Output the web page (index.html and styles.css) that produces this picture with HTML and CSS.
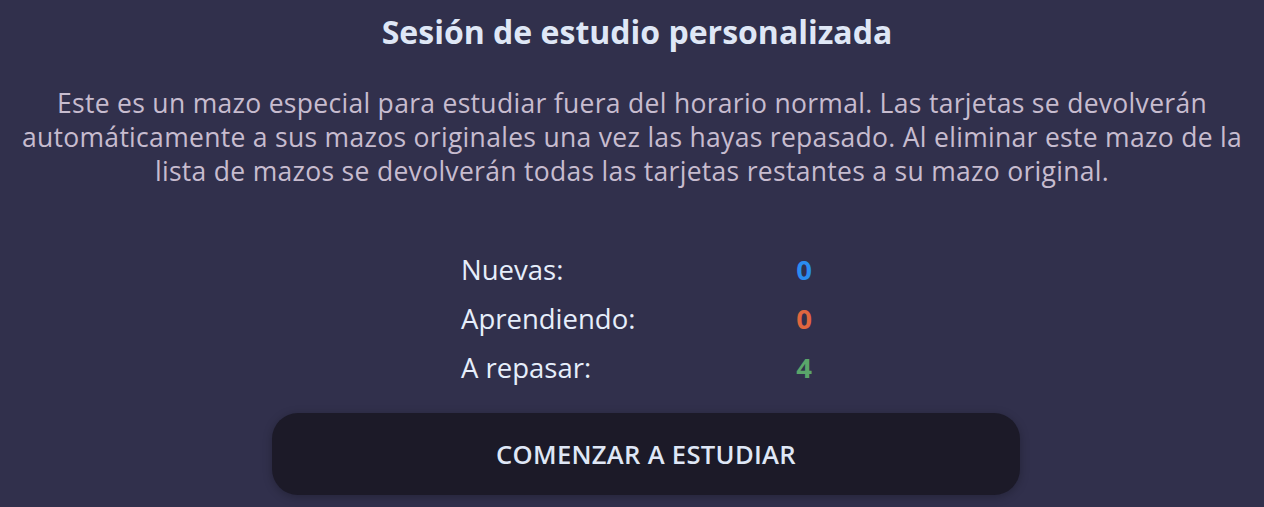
FILE: index.html
```html
<!DOCTYPE html>
<html lang="es">
<head>
<meta charset="utf-8">
<link rel="stylesheet" href="styles.css">
</head>
<body>
<main class="page">
  <h1 class="title">Sesión de estudio personalizada</h1>
  <p class="desc">Este es un mazo especial para estudiar fuera del horario normal. Las tarjetas se devolverán automáticamente a sus mazos originales una vez las hayas repasado. Al eliminar este mazo de la lista de mazos se devolverán todas las tarjetas restantes a su mazo original.</p>
  <table class="stats">
    <tr><td class="label">Nuevas:</td><td class="num new">0</td></tr>
    <tr><td class="label">Aprendiendo:</td><td class="num learn">0</td></tr>
    <tr><td class="label">A repasar:</td><td class="num review">4</td></tr>
  </table>
  <button class="study">COMENZAR A ESTUDIAR</button>
</main>
</body>
</html>
```
FILE: styles.css
```css
html, body {
  margin: 0;
  padding: 0;
  background: #31304c;
  height: 100%;
  overflow: hidden;
}
.page {
  font-family: "Open Sans", "Noto Sans", sans-serif;
  display: flex;
  flex-direction: column;
  align-items: center;
  padding: 12px 12px 0;
}
.title {
  margin: 0 0 0 10px;
  font-size: 32px;
  font-weight: 700;
  color: #dfe7f6;
  line-height: 40px;
}
.desc {
  margin: 34px 0 0;
  font-size: 26.5px;
  letter-spacing: 0.3px;
  line-height: 34px;
  color: #c7bccf;
  text-align: center;
  max-width: 1240px;
}
.stats {
  margin: 57px 0 0 9px;
  border-collapse: collapse;
  font-size: 27.5px;
  color: #e6eefb;
}
.stats td {
  height: 49px;
  padding: 0;
}
.label { width: 301px; }
.num { text-align: right; font-weight: 700; width: 50px; }
.new { color: #2a8cf0; }
.learn { color: #e0663f; }
.review { color: #5aa56a; }
.study {
  margin-top: 21px;
  margin-left: 28px;
  width: 748px;
  height: 82px;
  border: none;
  border-radius: 26px;
  background: #1c1a28;
  color: #dfe7f6;
  font-family: inherit;
  font-size: 25.6px;
  font-weight: 600;
  letter-spacing: 0.3px;
  box-shadow: 0 2px 10px rgba(0,0,0,0.25);
}
```
